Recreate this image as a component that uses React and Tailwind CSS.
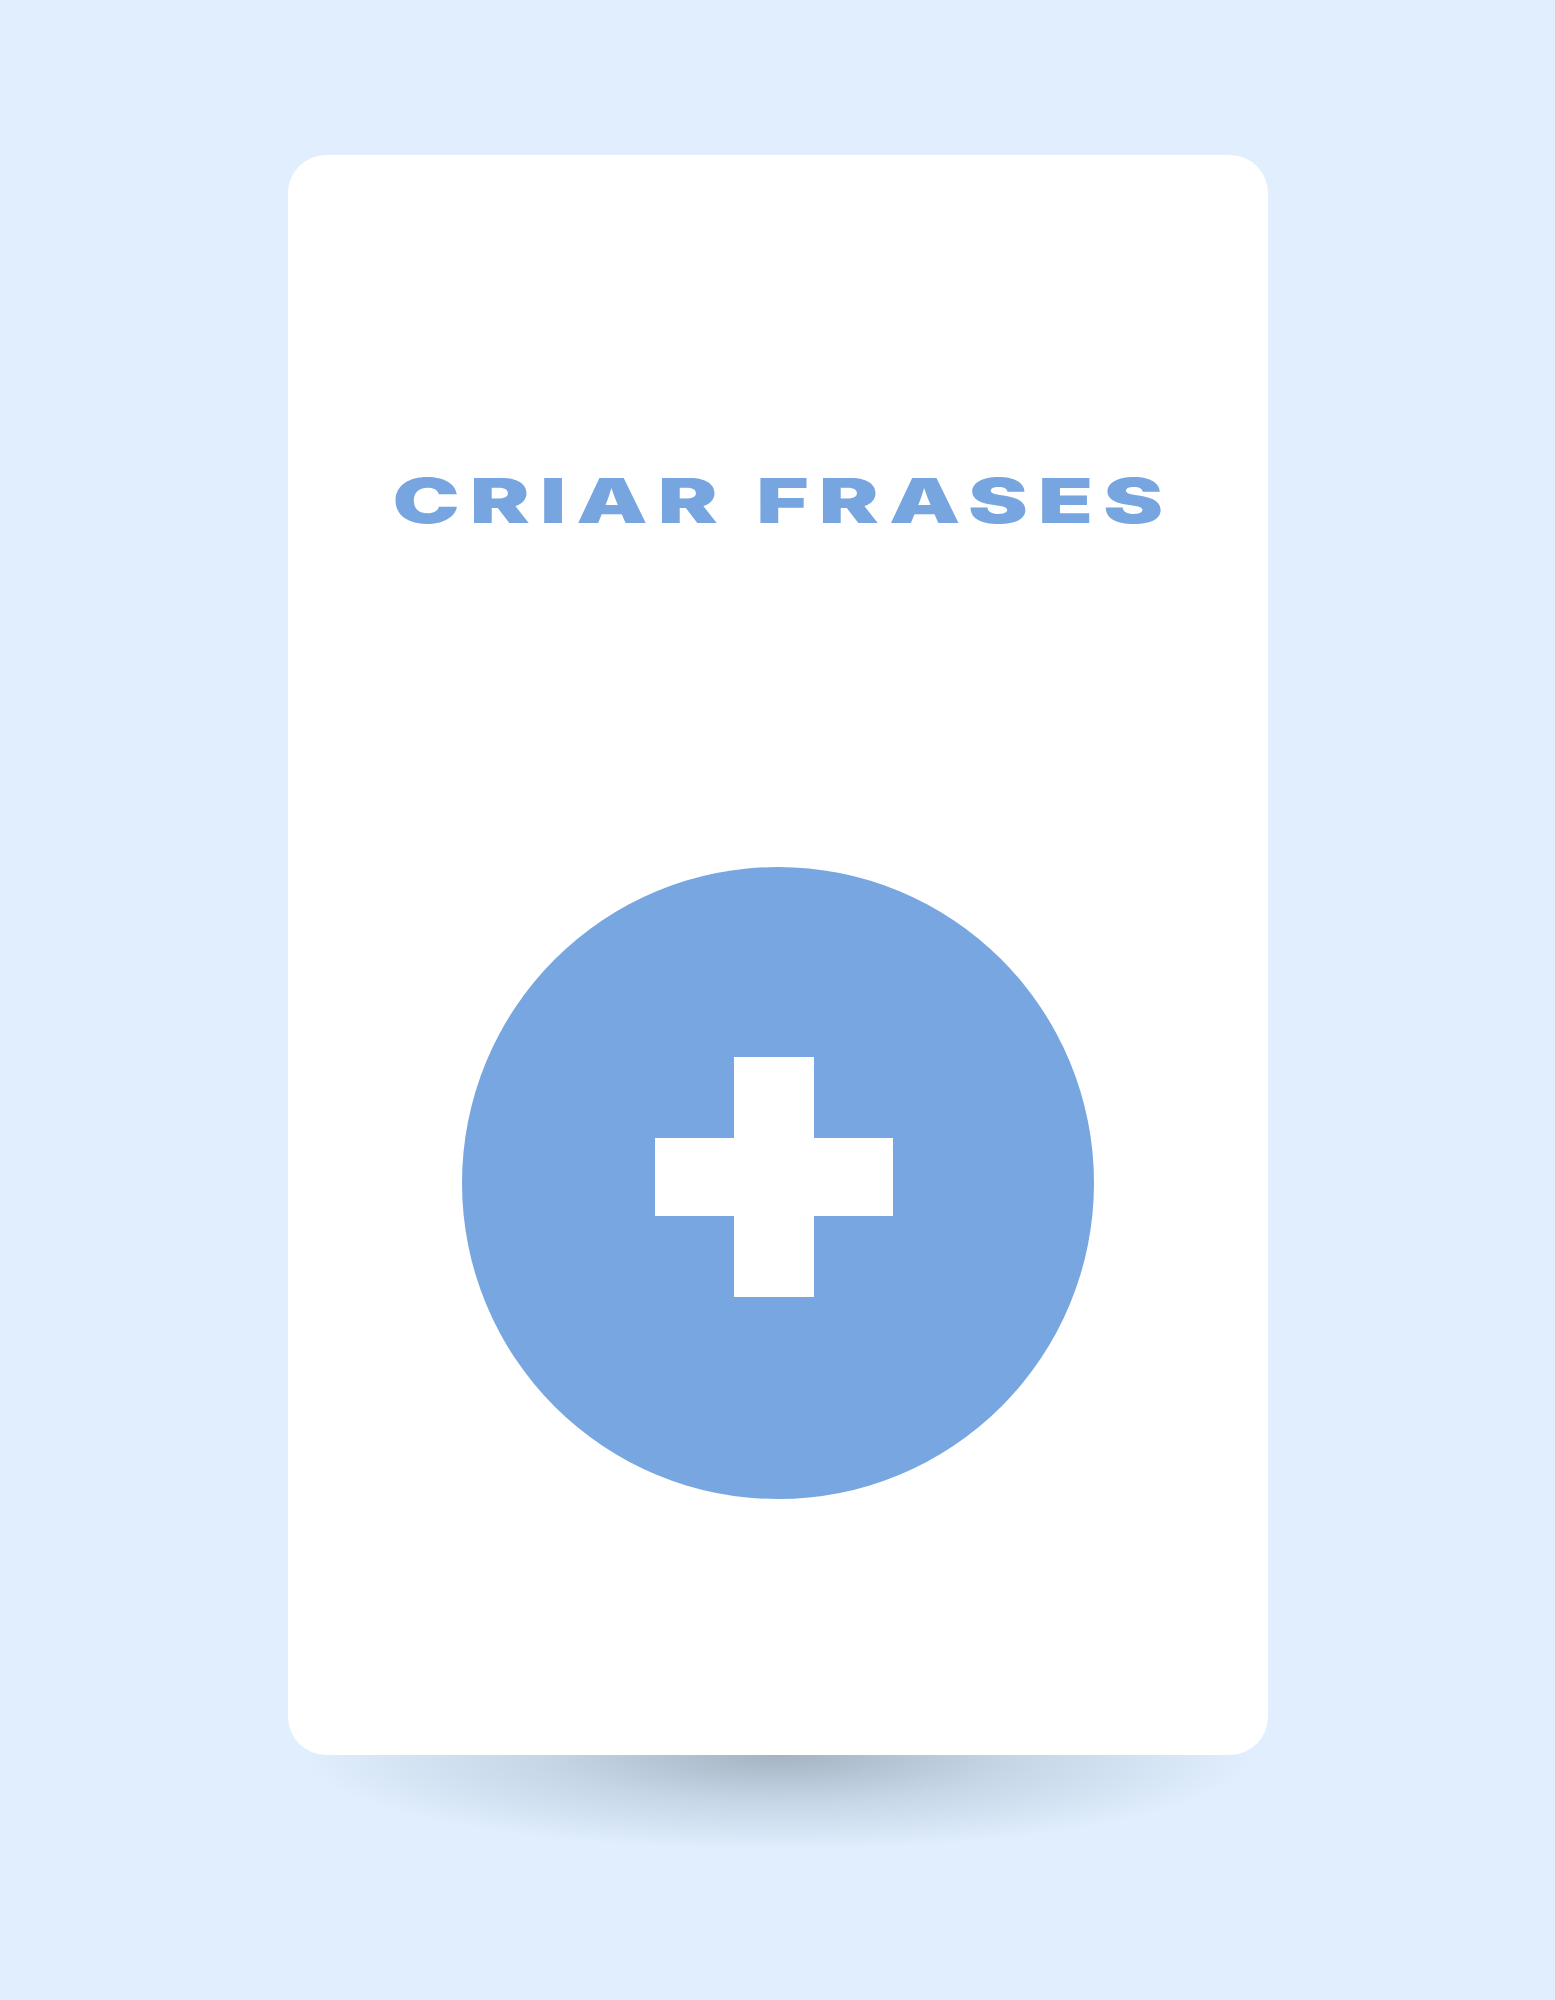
const PlusBadge = () => (
  <svg width="632" height="634" viewBox="0 0 632 634" className="mt-[334px] block">
    <circle cx="316" cy="317" r="316" fill="#77a6e0" />
    <rect x="272" y="191" width="80" height="240" fill="#ffffff" />
    <rect x="193" y="272" width="238" height="78" fill="#ffffff" />
  </svg>
);

const App = () => {
  return (
    <section className="min-h-screen w-full bg-[#e0eefd] flex flex-col items-center pt-[155px] pb-10">
      <div className="w-[980px] h-[1600px] bg-white rounded-[38px] flex flex-col items-center pt-[315px] relative z-10">
        <h1
          className="text-[62px] leading-none font-black text-[#76a5e0] uppercase tracking-[7px] pl-[7px] whitespace-nowrap scale-x-[1.45]"
          style={{ fontFamily: 'Inter, sans-serif' }}
        >
          Criar Frases
        </h1>
        <PlusBadge />
      </div>
      <div className="w-[950px] h-[95px] bg-[radial-gradient(ellipse_50%_100%_at_50%_0%,rgba(125,140,155,0.6),rgba(150,170,190,0.35)_50%,transparent)]"></div>
    </section>
  );
};

export default App;
